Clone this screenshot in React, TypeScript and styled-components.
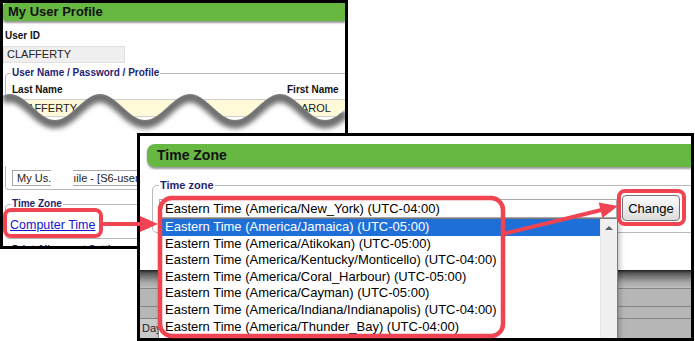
import React from "react";
import styled, { createGlobalStyle } from "styled-components";

const GREEN = "#67b843";
const NAVY = "#1f1f73";
const RED = "#f04452";

const GlobalStyle = createGlobalStyle`
  html, body { margin: 0; padding: 0; background: #fff; }
  body { font-family: "Liberation Sans", Arial, sans-serif; color: #000; overflow: hidden; }
  * { box-sizing: border-box; }
`;

const Stage = styled.div`
  position: relative;
  width: 695px;
  height: 341px;
  overflow: hidden;
  background: #fff;
`;

const ScreenWindow = styled.section<{ $x: number; $y: number; $w: number; $h: number; $z: number }>`
  position: absolute;
  left: ${(p) => p.$x}px;
  top: ${(p) => p.$y}px;
  width: ${(p) => p.$w}px;
  height: ${(p) => p.$h}px;
  z-index: ${(p) => p.$z};
  border: 3px solid #000;
  background: #fff;
  overflow: hidden;
`;

const TitleBar = styled.div<{ $large?: boolean }>`
  background: ${GREEN};
  height: ${(p) => (p.$large ? 23 : 18)}px;
  line-height: ${(p) => (p.$large ? 23 : 18)}px;
  margin: ${(p) => (p.$large ? "8px 0 0 7px" : "0")};
  padding-left: ${(p) => (p.$large ? 10 : 5)}px;
  border-radius: ${(p) => (p.$large ? "8px 0 0 8px" : "3px 0 0 3px")};
  font-size: ${(p) => (p.$large ? 14 : 13)}px;
  font-weight: bold;
  color: #111;
  box-shadow: 0 2px 2px rgba(0, 0, 0, 0.4);
  position: relative;
  z-index: 1;
`;

/* ---------- background profile window ---------- */

const ProfileBody = styled.div`
  position: relative;
`;

const TopPart = styled.div`
  position: relative;
  height: 140px;
  overflow: hidden;
`;

const FieldLabel = styled.div<{ $indent?: number }>`
  font-size: 10px;
  font-weight: bold;
  line-height: 12px;
  color: #111;
  padding-left: ${(p) => p.$indent ?? 0}px;
`;

const UserIdLabel = styled(FieldLabel)`
  margin-top: 9px;
`;

const ReadonlyBox = styled.div`
  margin-top: 4px;
  width: 122px;
  height: 17px;
  background: #efefef;
  border: 1px solid #e0e0e0;
  font-size: 11px;
  line-height: 15px;
  padding-left: 3px;
  color: #222;
`;

const Group = styled.fieldset<{ $top: number; $pl: number; $pb: number }>`
  margin: ${(p) => p.$top}px -4px 0 2px;
  border: 1px solid #b9b9b9;
  border-radius: 4px;
  padding: 0 0 ${(p) => p.$pb}px ${(p) => p.$pl}px;
  min-width: 0;
`;

const ZoneGroup = styled(Group)`
  margin-left: 12px;
  margin-right: -10px;
  border-radius: 5px;
`;

const GroupLegend = styled.legend<{ $size?: number; $ml?: number }>`
  padding: 0 1px;
  margin-left: ${(p) => p.$ml ?? 0}px;
  font-size: ${(p) => p.$size ?? 10}px;
  font-weight: bold;
  line-height: 12px;
  color: ${NAVY};
  white-space: nowrap;
`;

const NameGrid = styled.div`
  display: grid;
  grid-template-columns: 276px 1fr;
`;

const NameCell = styled.div`
  padding-top: 5px;
`;

const YellowInput = styled.div<{ $shift: number }>`
  margin: 3px 0 0 ${(p) => p.$shift}px;
  height: 18px;
  background: #fffbd8;
  border: 1px solid #cfcfcf;
  font-size: 11px;
  line-height: 16px;
  padding-left: 3px;
  color: #222;
  white-space: nowrap;
`;

const TearSvg = styled.svg`
  position: absolute;
  left: 0;
  top: 65px;
  z-index: 2;
`;

const ContinuedGroup = styled.div`
  margin: 0 -4px 0 2px;
  border: 1px solid #b9b9b9;
  border-top: none;
  border-radius: 0 0 4px 4px;
  padding: 0 0 3px 6px;
`;

const LabelClip = styled.div`
  height: 6px;
  overflow: hidden;
`;

const CutLabel = styled(FieldLabel)`
  margin-top: -6px;
`;

const PlainInput = styled.div`
  margin-top: 3px;
  height: 16px;
  border: 1px solid #a8a8a8;
  font-size: 11px;
  line-height: 14px;
  padding-left: 4px;
  white-space: nowrap;
  color: #222;
  display: flex;
`;

const TornGap = styled.span`
  display: inline-block;
  width: 22px;
  height: 18px;
  margin-top: -2px;
  background: #fff;
`;

const ComputerLink = styled.a`
  display: block;
  width: fit-content;
  margin-top: 8px;
  font-size: 12.5px;
  line-height: 15px;
  color: #1515d0;
  text-decoration: underline;
`;

/* ---------- foreground time zone window ---------- */

const SelectRow = styled.div`
  display: flex;
  align-items: center;
  gap: 5px;
  margin-top: 4px;
`;

const SelectBox = styled.div`
  position: relative;
  width: 458px;
  height: 19px;
  border: 1px solid #a9a9a9;
  background: #fff;
  font-size: 13px;
  line-height: 17px;
  padding-left: 5px;
  white-space: nowrap;
  &::after {
    content: "";
    position: absolute;
    right: 4px;
    top: 7px;
    border-left: 3px solid transparent;
    border-right: 3px solid transparent;
    border-top: 3px solid #000;
  }
`;

const ChangeButton = styled.button`
  width: 58px;
  height: 26px;
  padding: 0;
  border: 1px solid #767676;
  border-radius: 4px;
  background: linear-gradient(#fbfbfb, #dcdcdc);
  font-family: "Liberation Sans", Arial, sans-serif;
  font-size: 13px;
  color: #000;
`;

const Dropdown = styled.div`
  position: absolute;
  left: 18px;
  top: 82px;
  width: 460px;
  height: 140px;
  border: 1px solid #7a7a7a;
  background: #fff;
  display: flex;
  box-shadow: 2px 3px 5px rgba(0, 0, 0, 0.25);
  z-index: 3;
`;

const OptionList = styled.div`
  flex: 1;
`;

const OptionRow = styled.div<{ $selected?: boolean }>`
  height: 16.6px;
  line-height: 16.6px;
  font-size: 13px;
  padding-left: 6px;
  white-space: nowrap;
  background: ${(p) => (p.$selected ? "#1f6fd8" : "transparent")};
  color: ${(p) => (p.$selected ? "#fff" : "#000")};
`;

const ScrollTrack = styled.div`
  width: 17px;
  background: #f0f0f0;
  border-left: 1px solid #e6e6e6;
  position: relative;
  &::before {
    content: "";
    position: absolute;
    left: 4px;
    top: 7px;
    border-left: 4px solid transparent;
    border-right: 4px solid transparent;
    border-bottom: 4px solid #606060;
  }
`;

const UnderTable = styled.div`
  margin-top: 37px;
  background: #b6b6b6;
`;

const TableBand = styled.div`
  height: 18px;
  background: linear-gradient(#1e1e1e 0, #555 3px, #a5a5a5 12px, #bdbdbd 100%);
`;

const TableRow = styled.div<{ $h: number }>`
  height: ${(p) => p.$h}px;
  border-top: 1px solid #868686;
  display: flex;
`;

const DayCell = styled.div`
  width: 19px;
  background: #cacaca;
  border-right: 1px solid #999;
  font-size: 11px;
  line-height: 19px;
  padding-left: 2px;
  color: #222;
  white-space: nowrap;
`;

const Annotations = styled.svg`
  position: absolute;
  left: 0;
  top: 0;
  z-index: 10;
  pointer-events: none;
`;

/* ---------- helpers ---------- */

const waveY = (x: number) => 107 - 13 * Math.cos((2 * Math.PI * (x - 100)) / 90);

function buildTear() {
  const pts: string[] = [];
  for (let lx = 0; lx <= 342; lx += 2) {
    pts.push(`${lx},${(waveY(lx + 3) - 86).toFixed(2)}`);
  }
  const line = "M" + pts.join(" L");
  const area = line + " L342,80 L0,80 Z";
  return { line, area };
}

function arrow(x1: number, y1: number, x2: number, y2: number, len = 18, half = 8) {
  const dx = x2 - x1;
  const dy = y2 - y1;
  const l = Math.hypot(dx, dy);
  const ux = dx / l;
  const uy = dy / l;
  const bx = x2 - ux * len;
  const by = y2 - uy * len;
  const nx = -uy;
  const ny = ux;
  return {
    line: { x1, y1, x2: bx + ux * 2, y2: by + uy * 2 },
    head: `${bx + nx * half},${by + ny * half} ${x2},${y2} ${bx - nx * half},${by - ny * half}`,
  };
}

const zones: [string, string][] = [
  ["Jamaica", "05"],
  ["Atikokan", "05"],
  ["Kentucky/Monticello", "04"],
  ["Coral_Harbour", "05"],
  ["Cayman", "05"],
  ["Indiana/Indianapolis", "04"],
  ["Thunder_Bay", "04"],
];

export default function App() {
  const tear = buildTear();
  const a1 = arrow(101, 224, 158, 224);
  const a2 = arrow(503, 234, 618, 206);

  return (
    <Stage>
      <GlobalStyle />

      <ScreenWindow $x={0} $y={0} $w={348} $h={249} $z={1}>
        <TitleBar>My User Profile</TitleBar>
        <ProfileBody>
          <TopPart>
            <UserIdLabel $indent={2}>User ID</UserIdLabel>
            <ReadonlyBox>CLAFFERTY</ReadonlyBox>
            <Group $top={4} $pl={5} $pb={20}>
              <GroupLegend>User Name / Password / Profile</GroupLegend>
              <NameGrid>
                <NameCell>
                  <FieldLabel $indent={1}>Last Name</FieldLabel>
                  <YellowInput $shift={-2}>CLAFFERTY</YellowInput>
                </NameCell>
                <NameCell>
                  <FieldLabel>First Name</FieldLabel>
                  <YellowInput $shift={2}>CAROL</YellowInput>
                </NameCell>
              </NameGrid>
            </Group>
          </TopPart>

          <TearSvg width={342} height={80} viewBox="0 0 342 80">
            <defs>
              <clipPath id="tearClip">
                <path d={tear.area} />
              </clipPath>
              <filter id="tearBlur" x="-5%" y="-50%" width="110%" height="200%">
                <feGaussianBlur stdDeviation="2.6" />
              </filter>
            </defs>
            <path d={tear.area} fill="#fff" />
            <g clipPath="url(#tearClip)">
              <path
                d={tear.line}
                fill="none"
                stroke="#6e6e6e"
                strokeWidth={11}
                filter="url(#tearBlur)"
                transform="translate(0,3)"
              />
            </g>
          </TearSvg>

          <ContinuedGroup>
            <LabelClip>
              <CutLabel>Lab :</CutLabel>
            </LabelClip>
            <PlainInput>
              <span>My Us.</span>
              <TornGap />
              <span>ıile - [S6-user]</span>
            </PlainInput>
          </ContinuedGroup>

          <Group $top={8} $pl={4} $pb={5}>
            <GroupLegend $ml={1}>Time Zone</GroupLegend>
            <ComputerLink href="#">Computer Time</ComputerLink>
          </Group>

          <Group $top={5} $pl={4} $pb={5}>
            <GroupLegend $ml={1}>Print Alignment Settings</GroupLegend>
          </Group>
        </ProfileBody>
      </ScreenWindow>

      <ScreenWindow $x={137} $y={133} $w={557} $h={208} $z={2}>
        <TitleBar $large>Time Zone</TitleBar>
        <ZoneGroup $top={12} $pl={6} $pb={11}>
          <GroupLegend $size={11}>Time zone</GroupLegend>
          <SelectRow>
            <SelectBox>Eastern Time (America/New_York) (UTC-04:00)</SelectBox>
            <ChangeButton type="button">Change</ChangeButton>
          </SelectRow>
        </ZoneGroup>

        <UnderTable>
          <TableBand />
          <TableRow $h={18} />
          <TableRow $h={12} />
          <TableRow $h={20}>
            <DayCell>Day</DayCell>
          </TableRow>
        </UnderTable>

        <Dropdown>
          <OptionList>
            {zones.map(([city, off], i) => (
              <OptionRow key={city} $selected={i === 0}>
                Eastern Time (America/{city}) (UTC-{off}:00)
              </OptionRow>
            ))}
          </OptionList>
          <ScrollTrack />
        </Dropdown>
      </ScreenWindow>

      <Annotations width={695} height={341} viewBox="0 0 695 341">
        <rect x={5} y={210} width={96} height={26} rx={6} fill="none" stroke={RED} strokeWidth={4} />
        <line {...a1.line} stroke={RED} strokeWidth={4} />
        <polygon points={a1.head} fill={RED} />
        <rect x={160} y={198} width={343} height={138} rx={12} fill="none" stroke={RED} strokeWidth={4.5} />
        <rect x={619} y={191} width={65} height={33} rx={6} fill="none" stroke={RED} strokeWidth={4} />
        <line {...a2.line} stroke={RED} strokeWidth={4} />
        <polygon points={a2.head} fill={RED} />
      </Annotations>
    </Stage>
  );
}
